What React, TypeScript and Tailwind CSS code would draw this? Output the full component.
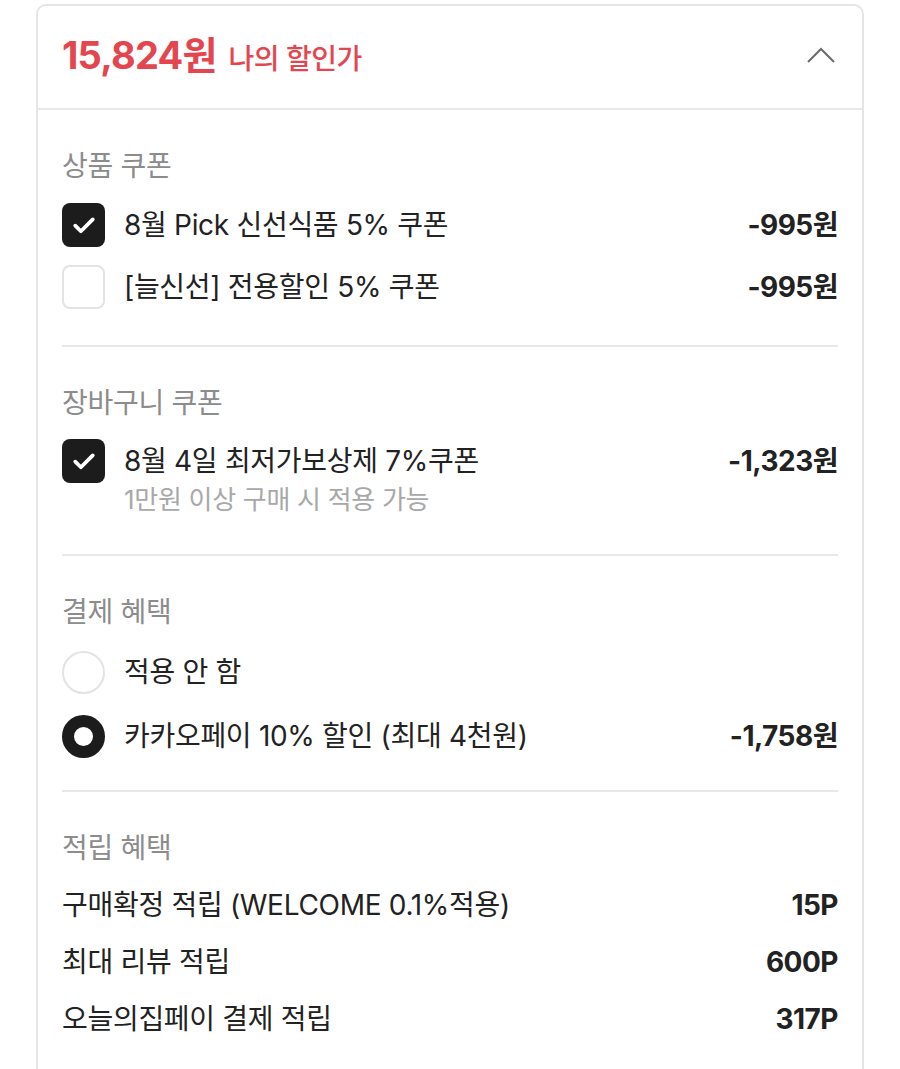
import React from "react";

const FONT = { fontFamily: 'Inter, "Noto Sans CJK KR", "Noto Sans", sans-serif' };

function Checkbox({ checked }: { checked: boolean }) {
  if (!checked) {
    return <div className="w-[43px] h-[44px] flex-shrink-0 rounded-[8px] border-2 border-[#e3e3e3] bg-white" />;
  }
  return (
    <div className="w-[43px] h-[44px] flex-shrink-0 rounded-[8px] bg-[#1c1c1c] flex items-center justify-center">
      <svg width="30" height="30" viewBox="0 0 24 24" fill="none">
        <path d="M5 12.5l4.5 4.5L19 7.5" stroke="#fff" strokeWidth="3" strokeLinecap="round" strokeLinejoin="round" />
      </svg>
    </div>
  );
}

function Radio({ checked }: { checked: boolean }) {
  if (!checked) {
    return <div className="w-[43px] h-[43px] flex-shrink-0 rounded-full border-2 border-[#e3e3e3] bg-white" />;
  }
  return <div className="w-[43px] h-[43px] flex-shrink-0 rounded-full border-[12px] border-[#1c1c1c] bg-white" />;
}

function SectionTitle({ children }: { children: React.ReactNode }) {
  return <div className="h-9 flex items-center text-[28px] text-[#8c8c8c] tracking-[-0.3px]">{children}</div>;
}

function Amount({ children }: { children: React.ReactNode }) {
  return <span className="text-[28px] font-bold text-[#222] tracking-[-0.5px]">{children}</span>;
}

export default function App() {
  return (
    <div className="min-h-screen bg-white px-[36px] pt-[4px]" style={FONT}>
      <div className="border-2 border-b-0 border-[#e5e5e5] rounded-t-[10px] bg-white overflow-hidden">
        <div className="h-[104px] px-[24px] pb-[4px] flex items-center justify-between border-b-2 border-[#e8e8e8]">
          <div className="flex items-baseline gap-3">
            <span className="text-[38px] font-bold text-[#e4464f] tracking-[-0.8px]">15,824원</span>
            <span className="text-[28px] font-medium text-[#e4464f] tracking-[-0.5px]">나의 할인가</span>
          </div>
          <svg width="30" height="20" viewBox="0 0 30 20" fill="none" className="mr-[2px]">
            <path d="M2 17L15 4l13 13" stroke="#6b6b6b" strokeWidth="2" />
          </svg>
        </div>

        <div className="px-[24px]">
          <div className="pt-[38px] pb-[36px] border-b-2 border-[#e8e8e8]">
            <SectionTitle>상품 쿠폰</SectionTitle>
            <div className="mt-[19px] flex flex-col gap-[18px]">
              <div className="h-11 flex items-center">
                <Checkbox checked />
                <span className="ml-[19px] flex-1 text-[28px] text-[#222] tracking-[-0.3px]">8월 Pick 신선식품 5% 쿠폰</span>
                <Amount>-995원</Amount>
              </div>
              <div className="h-11 flex items-center">
                <Checkbox checked={false} />
                <span className="ml-[19px] flex-1 text-[28px] text-[#222] tracking-[-0.3px]">[늘신선] 전용할인 5% 쿠폰</span>
                <Amount>-995원</Amount>
              </div>
            </div>
          </div>

          <div className="pt-[38px] pb-[39px] border-b-2 border-[#e8e8e8]">
            <SectionTitle>장바구니 쿠폰</SectionTitle>
            <div className="mt-[18px] flex items-start">
              <Checkbox checked />
              <div className="ml-[19px] flex-1">
                <div className="h-11 flex items-center justify-between">
                  <span className="text-[28px] text-[#222] tracking-[-0.3px]">8월 4일 최저가보상제 7%쿠폰</span>
                  <Amount>-1,323원</Amount>
                </div>
                <div className="h-8 flex items-center text-[26px] text-[#a8a8a8] tracking-[-0.3px]">1만원 이상 구매 시 적용 가능</div>
              </div>
            </div>
          </div>

          <div className="pt-[38px] pb-[32px] border-b-2 border-[#e8e8e8]">
            <SectionTitle>결제 혜택</SectionTitle>
            <div className="mt-[20px] flex flex-col gap-[20px]">
              <div className="h-11 flex items-center">
                <Radio checked={false} />
                <span className="ml-[19px] flex-1 text-[28px] text-[#222] tracking-[-0.3px]">적용 안 함</span>
              </div>
              <div className="h-11 flex items-center">
                <Radio checked />
                <span className="ml-[19px] flex-1 text-[28px] text-[#222] tracking-[-0.3px]">카카오페이 10% 할인 (최대 4천원)</span>
                <Amount>-1,758원</Amount>
              </div>
            </div>
          </div>

          <div className="pt-[38px] pb-[40px]">
            <SectionTitle>적립 혜택</SectionTitle>
            <div className="mt-[19px] flex flex-col gap-[17px]">
              <div className="h-10 flex items-center justify-between">
                <span className="text-[28px] text-[#222] tracking-[-0.3px]">구매확정 적립 (WELCOME 0.1%적용)</span>
                <Amount>15P</Amount>
              </div>
              <div className="h-10 flex items-center justify-between">
                <span className="text-[28px] text-[#222] tracking-[-0.3px]">최대 리뷰 적립</span>
                <Amount>600P</Amount>
              </div>
              <div className="h-10 flex items-center justify-between">
                <span className="text-[28px] text-[#222] tracking-[-0.3px]">오늘의집페이 결제 적립</span>
                <Amount>317P</Amount>
              </div>
            </div>
          </div>
        </div>
      </div>
    </div>
  );
}
